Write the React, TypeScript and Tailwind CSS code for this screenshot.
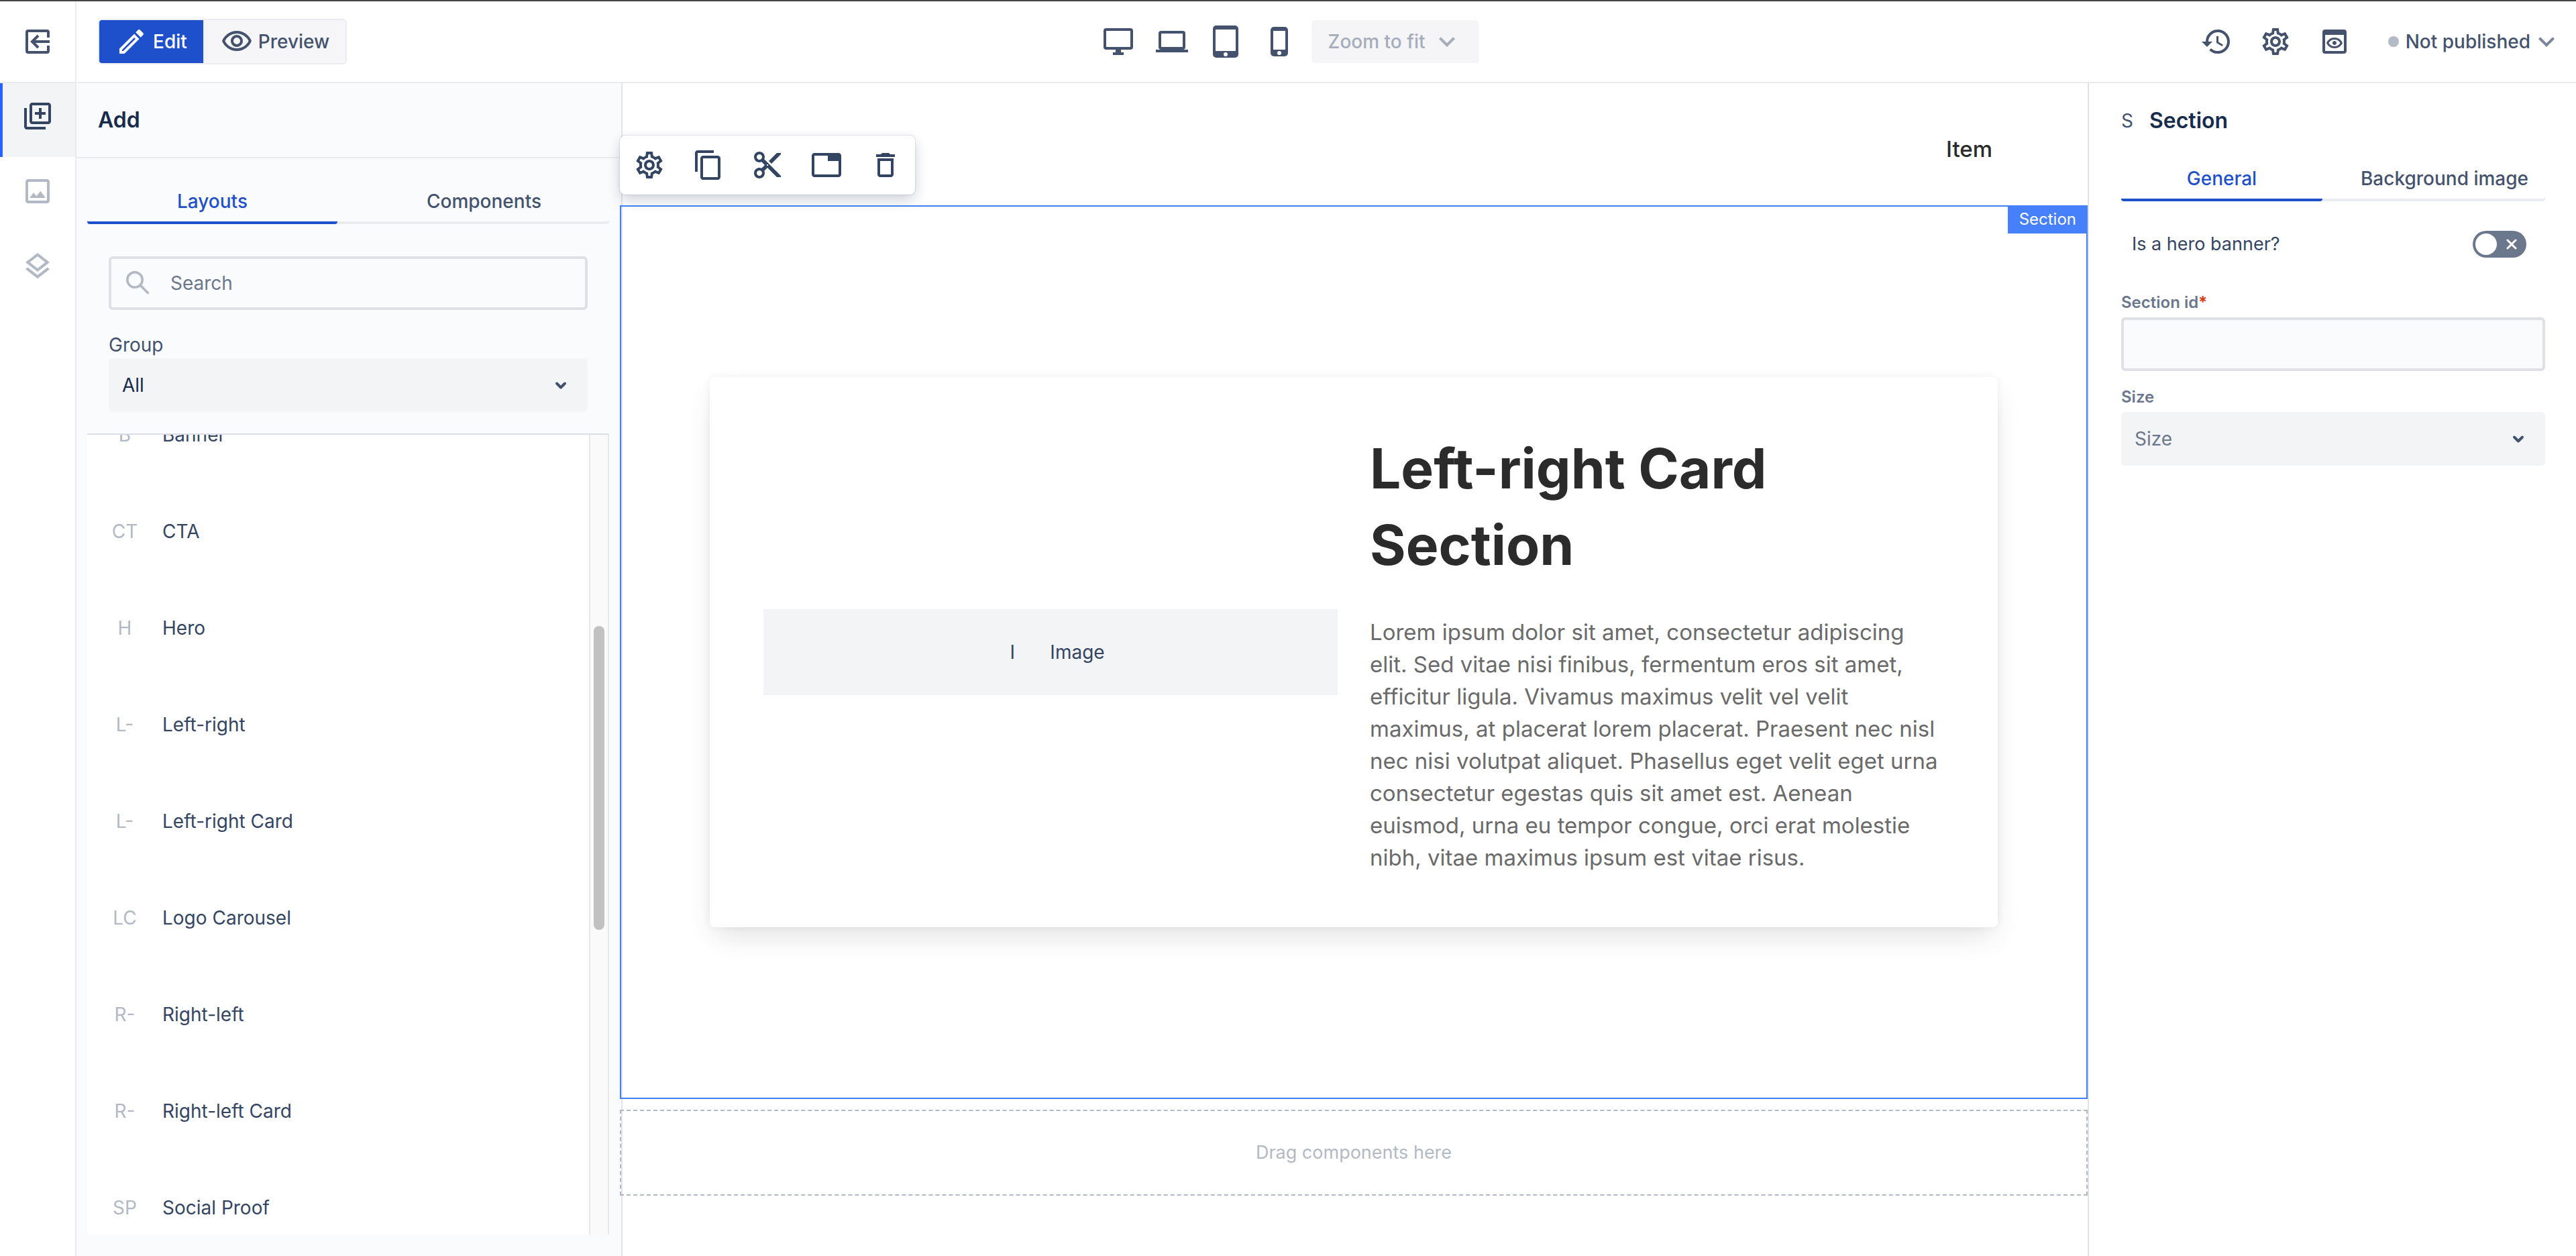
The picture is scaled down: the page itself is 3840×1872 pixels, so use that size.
import React from "react";
import {
  MdOutlineSettings, MdContentCopy, MdContentCut, MdOutlineTab, MdOutlineDelete, MdHistory,
  MdOutlinePreview, MdOutlineLibraryAdd, MdOutlineLayers, MdOutlineImage, MdOutlineVisibility, MdExpandMore,
} from "react-icons/md";

const layouts = [
  ["B", "Banner"], ["CT", "CTA"], ["H", "Hero"], ["L-", "Left-right"], ["L-", "Left-right Card"],
  ["LC", "Logo Carousel"], ["R-", "Right-left"], ["R-", "Right-left Card"], ["SP", "Social Proof"],
];

function Chevron({ className }: { className: string }) {
  return (
    <svg viewBox="0 0 24 24" className={className} fill="none" stroke="currentColor" strokeWidth="4" strokeLinecap="round" strokeLinejoin="round" aria-hidden="true">
      <path d="M6 9.5l6 6 6-6" />
    </svg>
  );
}

function Tabs({ items }: { items: string[] }) {
  return (
    <div role="tablist" className="flex gap-8 rounded-sm shadow-[inset_0_-4px_0_#ebecf0]">
      {items.map((t, i) => (
        <button
          key={t}
          role="tab"
          aria-selected={i === 0}
          className={
            i === 0
              ? "h-16 flex-1 rounded-sm border-b-4 border-[#1f50cc] text-[28px] leading-10 font-medium whitespace-nowrap text-[#1f50cc]"
              : "h-16 flex-1 border-b-4 border-transparent text-[28px] leading-10 font-medium whitespace-nowrap text-[#44526d]"
          }
        >
          {t}
        </button>
      ))}
    </div>
  );
}

function Select({ id, value, tone }: { id: string; value: string; tone: string }) {
  return (
    <div className="relative">
      <select id={id} className={`h-20 w-full appearance-none rounded-md bg-[#f3f4f6] px-5 text-[28px] ${tone}`}>
        <option>{value}</option>
      </select>
      <Chevron className="pointer-events-none absolute top-7 right-7 size-6 text-[#42526e]" />
    </div>
  );
}

export default function App() {
  return (
    <div className="flex min-h-screen flex-col border-t-2 border-[#444] bg-white font-['Inter','Liberation_Sans',sans-serif] text-[28px] text-[#344563]">
      <header className="grid h-[122px] shrink-0 grid-cols-[1fr_auto_1fr] items-center border-b-2 border-[#ebecf0] text-[#44526d]">
        <div className="flex h-full items-center gap-8">
          <div className="flex h-full w-[114px] shrink-0 items-center justify-center border-r-2 border-[#ebecf0]">
            <button aria-label="Exit" className="size-12">
              <svg viewBox="0 0 24 24" className="size-12" fill="none" stroke="currentColor" strokeWidth="2" aria-hidden="true">
                <path d="M20 9V5a1 1 0 0 0-1-1H5a1 1 0 0 0-1 1v14a1 1 0 0 0 1 1h14a1 1 0 0 0 1-1v-4M21 12H8.5M12.5 7.5L8 12l4.5 4.5" />
              </svg>
            </button>
          </div>
          <div className="flex h-[68px] overflow-hidden rounded-md border-2 border-[#ebecf0]">
            <button className="flex items-center gap-2 bg-[#1f50cc] px-6 font-medium text-white">
              <svg viewBox="0 0 24 24" className="size-12" fill="currentColor" aria-hidden="true">
                <path d="M3 17.25V21h3.75L17.81 9.94l-3.75-3.75L3 17.25zM5.92 19H5v-.92l9.06-9.06.92.92L5.92 19zM20.71 5.63l-2.34-2.34a1 1 0 0 0-1.41 0l-1.83 1.83 3.75 3.75 1.83-1.83a1 1 0 0 0 0-1.41z" />
              </svg>
              Edit
            </button>
            <button className="flex items-center gap-2 border-l-2 border-[#ebecf0] bg-[#f6f6f9] px-6 font-medium">
              <MdOutlineVisibility className="size-12" />
              Preview
            </button>
          </div>
        </div>
        <div className="flex items-center gap-6 pl-2">
          <div className="flex items-center gap-8">
            <button aria-label="Desktop">
              <svg viewBox="0 0 24 24" className="size-12" fill="none" stroke="currentColor" strokeWidth="2" aria-hidden="true">
                <rect x="2" y="3" width="20" height="14" rx="1" />
                <path d="M10 19h4M8 21h8" />
              </svg>
            </button>
            <button aria-label="Laptop">
              <svg viewBox="0 0 24 24" className="size-12" fill="none" stroke="currentColor" strokeWidth="2" aria-hidden="true">
                <rect x="3" y="5" width="18" height="12" rx="1" />
                <path d="M0 19h24" />
              </svg>
            </button>
            <button aria-label="Tablet">
              <svg viewBox="0 0 24 24" className="size-12" fill="currentColor" fillRule="evenodd" aria-hidden="true">
                <path d="M5 0h14a2.5 2.5 0 0 1 2.5 2.5v19a2.5 2.5 0 0 1-2.5 2.5H5a2.5 2.5 0 0 1-2.500-2.5v-19A2.5 2.5 0 0 1 5 0zM4.5 3v16h15V3zM12 20a1.5 1.5 0 1 0 0 3 1.5 1.5 0 0 0 0-3z" />
              </svg>
            </button>
            <button aria-label="Phone">
              <svg viewBox="0 0 24 24" className="size-12" fill="currentColor" fillRule="evenodd" aria-hidden="true">
                <path d="M8 1h8a2.5 2.5 0 0 1 2.5 2.5v17A2.5 2.5 0 0 1 16 23H8a2.5 2.5 0 0 1-2.500-2.5v-17A2.5 2.5 0 0 1 8 1zM7.5 4v14h9V4zM12 19a1.5 1.5 0 1 0 0 3 1.5 1.5 0 0 0 0-3z" />
              </svg>
            </button>
          </div>
          <button disabled className="flex h-16 items-center gap-2 rounded-md bg-[#f5f5f8] px-6 font-medium text-[#a5adba]">
            Zoom to fit
            <MdExpandMore className="size-12" />
          </button>
        </div>
        <div className="flex items-center justify-end gap-14 pr-5">
          <div className="flex items-center gap-10">
            <button aria-label="History"><MdHistory className="size-12" /></button>
            <button aria-label="Settings"><MdOutlineSettings className="size-12" /></button>
            <button aria-label="Page preview"><MdOutlinePreview className="size-12" /></button>
          </div>
          <button className="flex items-center font-medium">
            <span className="mr-2.5 size-4 rounded-full bg-[#b3b9c6]" />
            Not published
            <MdExpandMore className="size-12 text-[#7a869a]" />
          </button>
        </div>
      </header>

      <div className="flex flex-1">
        <nav className="flex w-[114px] shrink-0 flex-col border-r-2 border-[#ebecf0] text-[#b3b9c4]">
          <button aria-label="Add" className="flex h-[110px] items-center justify-center border-l-4 border-[#2962ff] bg-[#f3f4f6] pr-1 pb-3 text-[#344563]">
            <MdOutlineLibraryAdd className="size-12" />
          </button>
          <button aria-label="Images" className="flex h-[110px] items-center justify-center pb-2">
            <MdOutlineImage className="size-12" />
          </button>
          <button aria-label="Layers" className="flex h-[110px] items-center justify-center pb-1">
            <MdOutlineLayers className="size-12" />
          </button>
        </nav>

        <aside className="flex w-[814px] shrink-0 flex-col border-r-2 border-[#e3e4e8] bg-[#fafbfc]">
          <h2 className="flex h-28 shrink-0 items-center border-b-2 border-[#ebecf0] pl-8 text-[32px] font-semibold text-[#172b4d]">Add</h2>
          <div className="flex flex-1 flex-col pt-[34px] pr-[18px] pb-8 pl-4">
            <Tabs items={["Layouts", "Components"]} />
            <div className="flex flex-col px-8 pt-12 pb-8">
              <div className="relative">
                <svg viewBox="0 0 24 24" className="absolute top-4 left-5 size-12 text-[#b3b9c4]" fill="none" stroke="currentColor" strokeWidth="1.8" aria-hidden="true">
                  <circle cx="9.5" cy="9.5" r="5.6" />
                  <path d="M13.5 13.5l6.2 6.2" />
                </svg>
                <input aria-label="Search" placeholder="Search" className="h-20 w-full rounded-md border-4 border-[#dfe1e6] bg-[#fafbfc] pl-[88px] text-[28px] placeholder:text-[#6b778c]" />
              </div>
              <label htmlFor="group" className="mt-8 h-10 leading-10 text-[#42526e]">Group</label>
              <Select id="group" value="All" tone="text-[#172b4d]" />
            </div>
            <div className="relative h-[1194px] overflow-hidden border-t-2 border-[#dcdfe5] bg-white">
              <ul className="-mt-[72px] mr-[30px] h-full">
                {layouts.map(([a, n]) => (
                  <li key={n} className="flex h-36 items-center">
                    <span className="w-28 text-center text-[#b3b9c4]">{a}</span>
                    <span>{n}</span>
                  </li>
                ))}
              </ul>
              <div className="absolute inset-y-0 right-0 w-[30px] border-x-2 border-[#e8e8e8] bg-[#fafafa] px-[5px] pt-[285px]">
                <div className="h-[453px] rounded-full bg-[#c1c1c1]" />
              </div>
            </div>
          </div>
        </aside>

        <main className="-ml-1 flex min-w-0 flex-1 flex-col">
          <div className="relative flex h-[182px] items-center justify-end pt-4 pr-[142px] text-[33px] font-medium text-[#2b2b2b]">
            <a href="#item">Item</a>
            <div role="toolbar" aria-label="Section tools" className="absolute bottom-4 left-0 flex h-[88px] items-center gap-10 rounded-lg bg-white px-5 text-[#344563] shadow-[0_8px_20px_rgba(9,30,66,0.2),0_0_2px_rgba(9,30,66,0.3)]">
              <button aria-label="Settings"><MdOutlineSettings className="size-12" /></button>
              <button aria-label="Copy"><MdContentCopy className="size-12" /></button>
              <button aria-label="Cut"><MdContentCut className="size-12" /></button>
              <button aria-label="Tab"><MdOutlineTab className="size-12" /></button>
              <button aria-label="Delete"><MdOutlineDelete className="size-12" /></button>
            </div>
          </div>
          <section className="relative border-2 border-[#4080f5] px-[132px] py-[254px]">
            <span className="absolute -top-0.5 -right-0.5 flex h-[42px] items-center bg-[#4680fb] px-[17px] text-[24px] text-white">Section</span>
            <div className="grid grid-cols-2 items-center gap-12 rounded-lg bg-white p-20 shadow-[0_20px_40px_-8px_rgba(0,0,0,0.12),0_0_12px_rgba(0,0,0,0.06)]">
              <div className="flex h-32 items-center justify-center gap-8 bg-[#f3f4f6]">
                <span className="w-12 text-center">I</span>
                <span>Image</span>
              </div>
              <div>
                <h1 className="text-[82px] leading-[114px] font-bold text-[#2b2b2b]">Left-right Card<br />Section</h1>
                <p className="mt-12 text-[33px] leading-12 whitespace-nowrap text-[#6a6a6a]">
                  Lorem ipsum dolor sit amet, consectetur adipiscing<br />
                  elit. Sed vitae nisi finibus, fermentum eros sit amet,<br />
                  efficitur ligula. Vivamus maximus velit vel velit<br />
                  maximus, at placerat lorem placerat. Praesent nec nisl<br />
                  nec nisi volutpat aliquet. Phasellus eget velit eget urna<br />
                  consectetur egestas quis sit amet est. Aenean<br />
                  euismod, urna eu tempor congue, orci erat molestie<br />
                  nibh, vitae maximus ipsum est vitae risus.
                </p>
              </div>
            </div>
          </section>
          <div className="mt-4 flex h-32 items-center justify-center border-2 border-dashed border-[#b3b9c4] text-[27px] text-[#b3b9c4]">Drag components here</div>
        </main>

        <aside className="flex w-[728px] shrink-0 flex-col border-l-2 border-[#dfe1e6] pr-[46px] pl-12">
          <h2 className="flex h-28 items-center gap-6 text-[32px] font-semibold text-[#172b4d]">
            <span className="text-[28px] font-normal text-[#42526e]">S</span>
            Section
          </h2>
          <Tabs items={["General", "Background image"]} />
          <div className="mt-11 flex h-10 items-center justify-between pr-7 pl-4">
            <label htmlFor="hero" className="text-[27px]">Is a hero banner?</label>
            <span className="relative h-10 w-20">
              <input id="hero" type="checkbox" role="switch" className="h-10 w-20 appearance-none rounded-full bg-[#6b778c]" />
              <span className="pointer-events-none absolute top-1 left-1 size-8 rounded-full bg-white" />
              <svg viewBox="0 0 16 16" className="pointer-events-none absolute top-3 right-3.5 size-4" stroke="white" strokeWidth="3" strokeLinecap="round" aria-hidden="true">
                <path d="M2 2l12 12M14 2L2 14" />
              </svg>
            </span>
          </div>
          <label htmlFor="sid" className="mt-[49px] h-10 text-[24px] leading-9 font-semibold text-[#6b778c]">Section id<span className="text-[#de350b]">*</span></label>
          <input id="sid" className="h-20 w-full rounded-md border-4 border-[#dfe1e6] bg-[#fafbfc] px-4" />
          <label htmlFor="size" className="mt-[21px] h-10 text-[24px] leading-9 font-semibold text-[#6b778c]">Size</label>
          <Select id="size" value="Size" tone="text-[#6b778c]" />
        </aside>
      </div>
    </div>
  );
}
